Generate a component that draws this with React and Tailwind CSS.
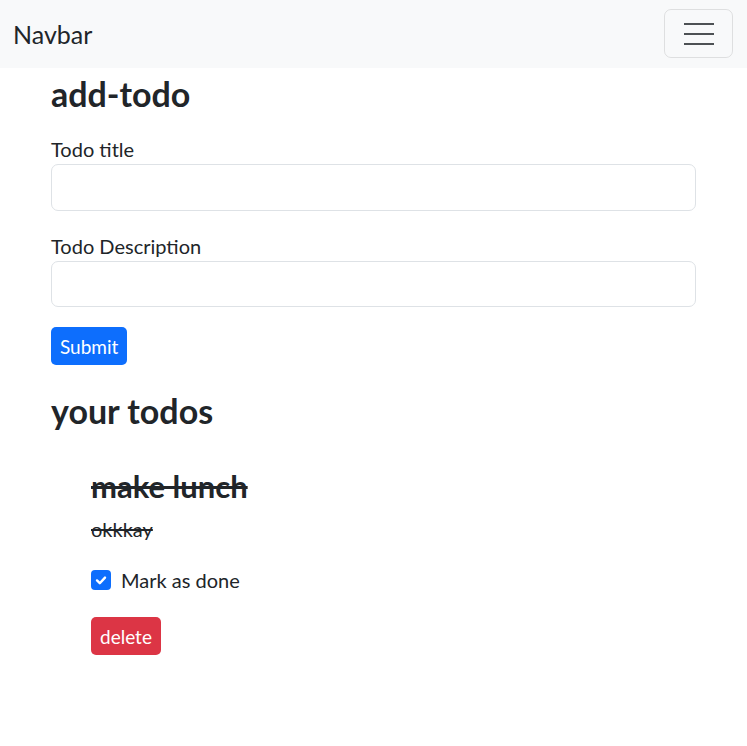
import React from 'react';

const App = () => {
  return (
    <div className="min-h-screen bg-white text-[#212529]" style={{ fontFamily: 'Lato, "Noto Sans", sans-serif' }}>
      <nav className="h-[68px] bg-[#f8f9fa] flex items-center justify-between pl-[13px] pr-[14px]">
        <span className="text-[25px] leading-none">Navbar</span>
        <button className="w-[69px] h-[49px] -mt-[1px] border border-[rgba(0,0,0,0.1)] rounded-[7px] flex flex-col items-center justify-center gap-[8px]">
          <span className="block w-[30px] h-[2px] bg-[#4d5154]" />
          <span className="block w-[30px] h-[2px] bg-[#4d5154]" />
          <span className="block w-[30px] h-[2px] bg-[#4d5154]" />
        </button>
      </nav>

      <div className="px-[51px]">
        <h2 className="text-[34px] font-bold leading-[40px] mt-[6px] mb-[20px]">add-todo</h2>

        <div className="mb-[16px]">
          <label className="block text-[20px] leading-[30px]">Todo title</label>
          <input type="text" className="block w-full h-[47px] border border-[#dee2e6] rounded-[7px]" />
        </div>

        <div className="mb-[20px]">
          <label className="block text-[20px] leading-[30px] mt-[20px]">Todo Description</label>
          <input type="text" className="block w-full h-[46px] border border-[#dee2e6] rounded-[7px]" />
        </div>

        <button className="h-[38px] px-[9px] bg-[#0d6efd] text-white text-[19px] leading-none rounded-[5px]">Submit</button>

        <h2 className="text-[34px] font-bold leading-[40px] mt-[26px]">your todos</h2>

        <div className="pl-[40px] mt-[37px]">
          <h4 className="text-[31px] font-bold leading-[36px] line-through decoration-[3px]">make lunch</h4>
          <p className="text-[20px] leading-[30px] mt-[10px] line-through">okkkay</p>
          <div className="flex items-center mt-[21px]">
            <span className="w-[20px] h-[20px] rounded-[4px] bg-[#0d6efd] flex items-center justify-center">
              <svg width="16" height="16" viewBox="0 0 20 20">
                <path d="M5 10.5l3.5 3.5l6.5-7" fill="none" stroke="#fff" strokeWidth="3" strokeLinecap="round" strokeLinejoin="round" />
              </svg>
            </span>
            <span className="ml-[10px] text-[20px] leading-[30px]">Mark as done</span>
          </div>
          <button className="mt-[22px] h-[38px] px-[9px] bg-[#dc3545] text-white text-[19px] leading-none rounded-[5px]">delete</button>
        </div>
      </div>
    </div>
  );
};

export default App;
